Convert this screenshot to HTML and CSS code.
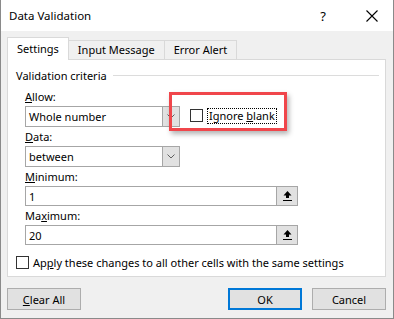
FILE: index.html
```html
<!DOCTYPE html>
<html lang="en">
<head>
    <meta charset="UTF-8">
    <title>Data Validation</title>
    <link rel="stylesheet" href="styles.css">
</head>
<body>

    <div class="window">
        <!-- Title bar -->
        <div class="titlebar">
            <span class="title">Data Validation</span>
            <span class="help">?</span>
            <svg class="close" width="12" height="12" viewBox="0 0 12 12">
                <path d="M0.5 0.5 L11.5 11.5 M11.5 0.5 L0.5 11.5" stroke="#000" stroke-width="1.1" fill="none"/>
            </svg>
        </div>

        <div class="body">
            <!-- Tabs -->
            <div class="tabs">
                <div class="tab active">Settings</div>
                <div class="tab">Input Message</div>
                <div class="tab">Error Alert</div>
            </div>

            <!-- Settings panel -->
            <div class="panel">
                <div class="group-head">
                    <span>Validation criteria</span>
                    <span class="rule"></span>
                </div>

                <div class="fields">
                    <div class="label first"><u>A</u>llow:</div>
                    <div class="allow-row">
                        <div class="select">
                            <span class="value">Whole number</span>
                            <span class="drop">
                                <svg width="8" height="5" viewBox="0 0 8 5"><path d="M0.5 0.5 L4 4 L7.5 0.5" stroke="#606060" fill="none"/></svg>
                            </span>
                        </div>
                        <div class="check ignore">
                            <span class="box"></span>
                            <span class="focus">Ignore <u>b</u>lank</span>
                        </div>
                    </div>

                    <div class="label"><u>D</u>ata:</div>
                    <div class="select">
                        <span class="value">between</span>
                        <span class="drop">
                            <svg width="8" height="5" viewBox="0 0 8 5"><path d="M0.5 0.5 L4 4 L7.5 0.5" stroke="#606060" fill="none"/></svg>
                        </span>
                    </div>

                    <div class="label"><u>M</u>inimum:</div>
                    <div class="input">
                        <span class="value">1</span>
                        <span class="spin">
                            <svg width="9" height="10" viewBox="0 0 9 10"><path d="M4.5 0 L8.5 4.5 H6 V7 H3 V4.5 H0.5 Z" fill="#000"/><rect x="0" y="9" width="9" height="1" fill="#000"/></svg>
                        </span>
                    </div>

                    <div class="label">Ma<u>x</u>imum:</div>
                    <div class="input">
                        <span class="value">20</span>
                        <span class="spin">
                            <svg width="9" height="10" viewBox="0 0 9 10"><path d="M4.5 0 L8.5 4.5 H6 V7 H3 V4.5 H0.5 Z" fill="#000"/><rect x="0" y="9" width="9" height="1" fill="#000"/></svg>
                        </span>
                    </div>
                </div>

                <div class="check apply">
                    <span class="box"></span>
                    <span>Ap<u>p</u>ly these changes to all other cells with the same settings</span>
                </div>
            </div>

            <!-- Dialog buttons -->
            <div class="buttons">
                <button class="btn"><u>C</u>lear All</button>
                <span class="spacer"></span>
                <button class="btn default">OK</button>
                <button class="btn">Cancel</button>
            </div>
        </div>

        <!-- Red annotation box -->
        <div class="highlight"></div>
    </div>

</body>
</html>
```

FILE: styles.css
```css
body {
    margin: 0;
    font-family: "Noto Sans", "Open Sans", sans-serif;
    font-size: 11px;
    color: #000;
}

.window {
    position: relative;
    width: 394px;
    height: 319px;
    box-sizing: border-box;
    border: 1px solid #8a8a8a;
    border-top: none;
    background: #f0f0f0;
}

.titlebar {
    height: 31px;
    background: #fff;
    display: flex;
    align-items: center;
    padding-left: 8px;
    font-size: 11.5px;
}

.title {
    flex: 1;
}

.help {
    font-size: 13px;
    margin-right: 40px;
}

.close {
    margin-right: 15px;
}

.body {
    padding: 7px 7px 0 6px;
}

.tabs {
    display: flex;
    align-items: flex-end;
    height: 21px;
}

.tab {
    height: 18px;
    line-height: 18px;
    padding: 0 9px;
    border: 1px solid #d9d9d9;
    border-bottom: none;
    margin-left: -1px;
}

.tab.active {
    height: 22px;
    line-height: 21px;
    background: #fff;
    margin-left: 0;
    margin-bottom: -1px;
    position: relative;
    z-index: 1;
}

.panel {
    background: #fff;
    border: 1px solid #d9d9d9;
    height: 218px;
    box-sizing: border-box;
    padding: 8px 6px 0 8px;
}

.group-head {
    display: flex;
    align-items: center;
    height: 15px;
    line-height: 15px;
}

.group-head .rule {
    flex: 1;
    height: 1px;
    background: #dcdcdc;
    margin-left: 6px;
}

.fields {
    padding-left: 9px;
}

.label {
    height: 15px;
    line-height: 15px;
    margin-top: 2px;
}

.label.first {
    margin-top: 6px;
}

.allow-row {
    display: flex;
    align-items: center;
}

.select, .input {
    display: flex;
    box-sizing: border-box;
    border: 1px solid #a6a6a6;
    background: #fff;
    margin-top: 2px;
}

.select {
    width: 155px;
    height: 21px;
}

.input {
    width: 273px;
    height: 20px;
}

.value {
    flex: 1;
    line-height: 19px;
    padding-left: 3px;
}

.drop, .spin {
    display: flex;
    align-items: center;
    justify-content: center;
    background: #e1e1e1;
    border-left: 1px solid #a6a6a6;
}

.drop {
    width: 16px;
}

.spin {
    width: 20px;
}

.check {
    display: flex;
    align-items: center;
}

.check .box {
    width: 13px;
    height: 13px;
    box-sizing: border-box;
    border: 1px solid #333;
    background: #fff;
    margin-right: 4px;
}

.ignore {
    margin-left: 10px;
}

.ignore .focus {
    border: 1px dotted #000;
    padding: 0 1px;
    line-height: 14px;
}

.apply {
    margin-top: 10px;
}

.buttons {
    display: flex;
    margin-top: 11px;
}

.spacer {
    flex: 1;
}

.btn {
    width: 74px;
    height: 22px;
    margin: 0 0 0 10px;
    padding: 0;
    font: inherit;
    background: #e1e1e1;
    border: 1px solid #adadad;
}

.btn:first-child {
    margin-left: 0;
}

.btn.default {
    border: 2px solid #0078d7;
}

.highlight {
    position: absolute;
    left: 168px;
    top: 92px;
    width: 118px;
    height: 39px;
    box-sizing: border-box;
    border: 3px solid #f0464b;
    box-shadow: 2px 3px 5px rgba(0, 0, 0, 0.3);
}
```
